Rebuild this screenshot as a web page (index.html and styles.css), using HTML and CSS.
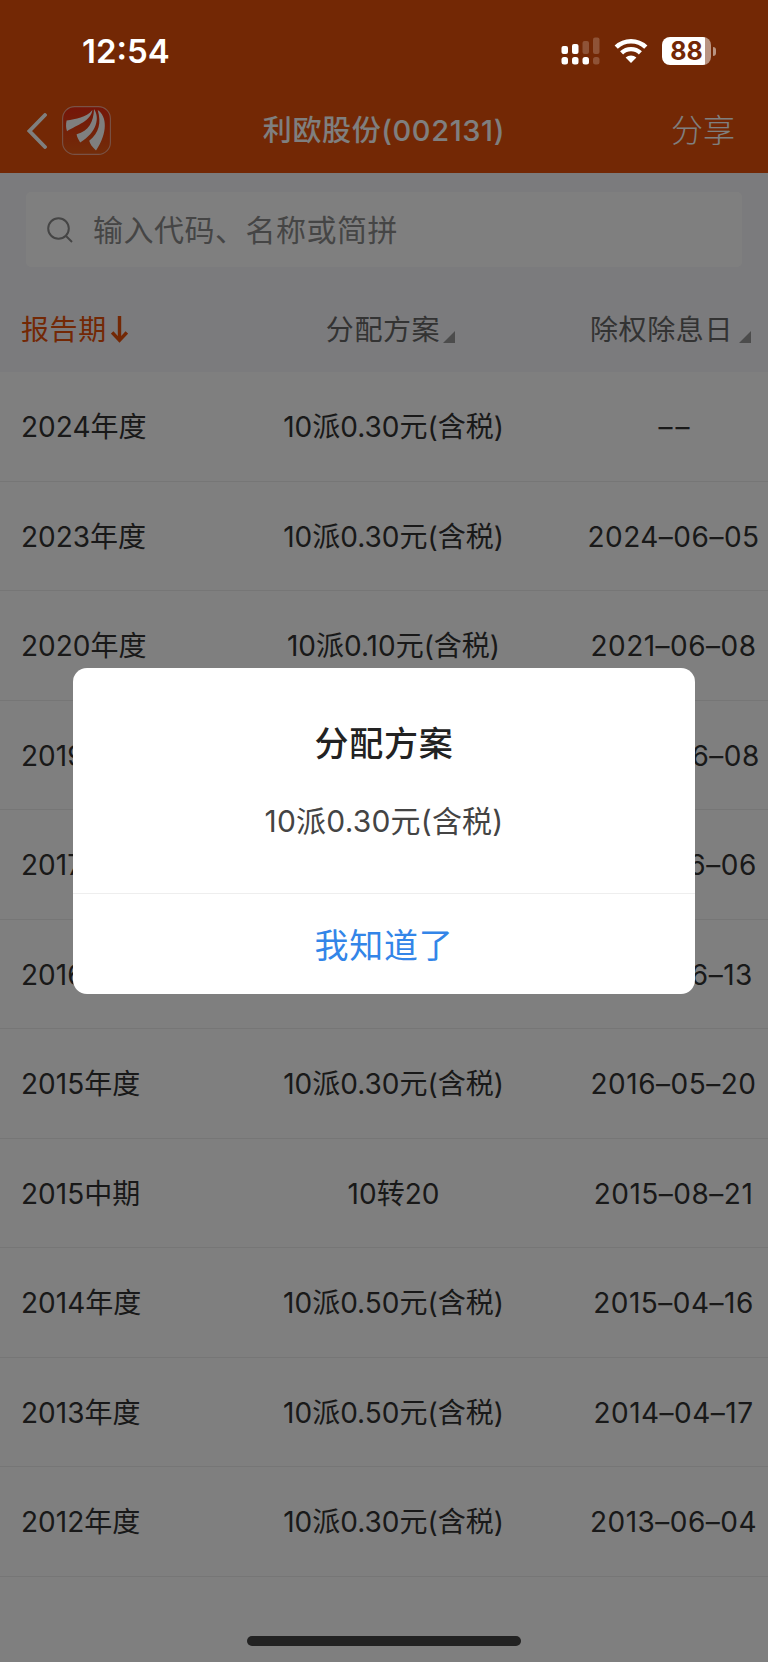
FILE: index.html
```
<!DOCTYPE html>
<html lang="zh-CN">
<head>
  <meta charset="UTF-8">
  <meta name="viewport" content="width=device-width, initial-scale=1.0">
  <title>利欧股份(002131)</title>
  <link rel="stylesheet" href="styles.css">
</head>
<body>

  <div class="app">
    <header class="header">
      <!-- Status bar -->
      <div class="status-bar">
        <span class="time">12:54</span>
        <div class="status-icons">
          <svg class="signal" width="39" height="28" viewBox="0 0 39 28" fill="#fff">
            <rect x="0.5" y="9" width="6.5" height="8" rx="2"/>
            <rect x="11" y="7" width="6.5" height="10" rx="2"/>
            <rect x="21.5" y="4" width="6.5" height="13" rx="2" opacity=".2"/>
            <rect x="32" y="0.5" width="6.5" height="16.5" rx="2" opacity=".2"/>
            <rect x="0.5" y="20" width="6.5" height="7.5" rx="2.5"/>
            <rect x="11" y="20" width="6.5" height="7.5" rx="2.5"/>
            <rect x="21.5" y="20" width="6.5" height="7.5" rx="2.5"/>
            <rect x="32" y="20" width="6.5" height="7.5" rx="2.5" opacity=".2"/>
          </svg>
          <svg class="wifi" width="34" height="26" viewBox="0 0 34 26">
            <path d="M2.2 9.2A21.5 21.5 0 0 1 31.8 9.2" fill="none" stroke="#fff" stroke-width="4.6"/>
            <path d="M7.6 14.9A13.6 13.6 0 0 1 26.4 14.9" fill="none" stroke="#fff" stroke-width="4.4"/>
            <path d="M11.6 19.6a8 8 0 0 1 10.8 0L17 25z" fill="#fff"/>
          </svg>
          <div class="battery"><span class="level">88</span></div>
          <span class="battery-cap"></span>
        </div>
      </div>

      <!-- Title bar -->
      <div class="nav">
        <div class="nav-left">
          <svg width="20" height="36" viewBox="0 0 20 36">
            <path d="M18 2 2.5 18 18 34" fill="none" stroke="#fff" stroke-width="3.8" stroke-linecap="round"/>
          </svg>
          <svg class="logo" width="49" height="49" viewBox="0 0 49 49">
            <defs>
              <linearGradient id="logoBg" x1="0" y1="0" x2="0" y2="1">
                <stop offset="0" stop-color="#ea2a10"/>
                <stop offset="1" stop-color="#e65a12"/>
              </linearGradient>
            </defs>
            <rect x=".6" y=".6" width="47.8" height="47.8" rx="12" fill="url(#logoBg)" stroke="#f2a58c" stroke-width="1.1"/>
            <g fill="#fff">
              <path d="M4.6 14.6C14 12.6 24 12 30.4 4 29 15 15 19 5 25.2 3.8 22 3.8 18 4.6 14.6z"/>
              <path d="M32 3C38 12 35 26 18.2 36.6 16 33 15 31 14.6 28.3 27 25 31.5 16 32 3z"/>
              <path d="M35.7 4C45 10 46 27 34 44.4 30 41 28 38 27.2 34.8 37 27 39.5 17 35.7 4z"/>
            </g>
          </svg>
        </div>
        <h1 class="nav-title">利欧股份(002131)</h1>
        <span class="share">分享</span>
      </div>
    </header>

    <div class="search">
      <div class="search-box">
        <svg width="26" height="26" viewBox="0 0 26 26" fill="none" stroke="#8a8a8a" stroke-width="2">
          <circle cx="11.5" cy="11.5" r="10.3"/>
          <path d="M18.5 18.5 25 25"/>
        </svg>
        <span>输入代码、名称或简拼</span>
      </div>
    </div>

    <div class="row table-head">
      <div class="sorted">报告期<svg width="17" height="27" viewBox="0 0 17 27" fill="none" stroke="#e6500a" stroke-width="3.4"><path d="M8.5 0v24M1.2 16.5l7.3 7.8 7.3-7.8"/></svg></div>
      <div>分配方案<i class="corner"></i></div>
      <div>除权除息日<i class="corner wide"></i></div>
    </div>

    <div class="row"><div>2024年度</div><div>10派0.30元(含税)</div><div class="date none">––</div></div>
    <div class="row"><div>2023年度</div><div>10派0.30元(含税)</div><div class="date">2024–06–05</div></div>
    <div class="row"><div>2020年度</div><div>10派0.10元(含税)</div><div class="date">2021–06–08</div></div>
    <div class="row"><div>2019年度</div><div>10派0.30元(含税)</div><div class="date">2020–06–08</div></div>
    <div class="row"><div>2017年度</div><div>10派0.30元(含税)</div><div class="date">2018–06–06</div></div>
    <div class="row"><div>2016年度</div><div>10派0.30元(含税)</div><div class="date">2017–06–13</div></div>
    <div class="row"><div>2015年度</div><div>10派0.30元(含税)</div><div class="date">2016–05–20</div></div>
    <div class="row"><div>2015中期</div><div>10转20</div><div class="date">2015–08–21</div></div>
    <div class="row"><div>2014年度</div><div>10派0.50元(含税)</div><div class="date">2015–04–16</div></div>
    <div class="row"><div>2013年度</div><div>10派0.50元(含税)</div><div class="date">2014–04–17</div></div>
    <div class="row"><div>2012年度</div><div>10派0.30元(含税)</div><div class="date">2013–06–04</div></div>

    <div class="overlay">
      <div class="dialog">
        <div class="dialog-body">
          <h2>分配方案</h2>
          <p>10派0.30元(含税)</p>
        </div>
        <button type="button" class="dialog-btn">我知道了</button>
      </div>
    </div>
    <div class="home-bar"></div>
  </div>

</body>
</html>
```
FILE: styles.css
```
* {
  box-sizing: border-box;
}
body {
  margin: 0;
  background-color: #fff;
  font-family: Inter, "Noto Sans CJK SC", sans-serif;
}
.app {
  position: relative;
  width: 768px;
  height: 1662px;
  overflow: hidden;
  background-color: #fff;
  color: #333;
}

/* header */
.header {
  height: 173px;
  background-color: #e6500a;
  color: #fff;
}
.status-bar {
  position: relative;
  z-index: 2;
  display: flex;
  justify-content: space-between;
  align-items: center;
  height: 91px;
  padding: 11px 52px 0 82px;
}
.time {
  font-size: 33px;
  font-weight: 600;
}
.status-icons {
  display: flex;
  align-items: center;
}
.wifi {
  margin: 0 14px;
}
.battery {
  width: 49px;
  height: 28px;
  border-radius: 8px;
  background: linear-gradient(to right, #fff 43px, #b99482 43px);
  color: #732805;
  text-align: center;
}
.level {
  display: block;
  font-size: 25px;
  font-weight: 700;
  line-height: 28px;
}
.battery-cap {
  width: 3px;
  height: 9px;
  margin-left: 2px;
  border-radius: 0 4px 4px 0;
  background-color: #b99482;
}
.nav {
  display: grid;
  grid-template-columns: 200px 1fr 200px;
  align-items: center;
  height: 79px;
}
.nav-left {
  display: flex;
  align-items: center;
  gap: 15px;
  padding-left: 27px;
}
.nav-title {
  margin: 0;
  padding-bottom: 6px;
  font-size: 29px;
  font-weight: 500;
  text-align: center;
  letter-spacing: 0.6px;
}
.share {
  padding: 0 33px 5px 0;
  font-size: 32px;
  font-weight: 300;
  text-align: right;
}

/* search */
.search {
  height: 96px;
  padding: 19px 26px 0;
  background-color: #f6f6fa;
}
.search-box {
  display: flex;
  align-items: center;
  gap: 20px;
  height: 75px;
  padding-left: 21px;
  border-radius: 5px;
  background-color: #fff;
  color: #8a8a8a;
  font-size: 30px;
  letter-spacing: 0.5px;
}
.search-box span {
  padding-bottom: 4px;
}

/* table */
.row {
  display: grid;
  grid-template-columns: 208px 371px 189px;
  align-items: center;
  height: 109.5px;
  border-bottom: 1px solid #ececec;
  font-size: 28px;
  text-align: center;
  white-space: nowrap;
}
.row > div {
  padding-bottom: 3px;
}
.row > div:first-child {
  padding-left: 21px;
  text-align: left;
}
.row > .date {
  padding: 1px 0 0;
  letter-spacing: 0.5px;
}
.row > .none {
  padding-left: 4px;
  letter-spacing: 3px;
}
.table-head {
  height: 103.4px;
  padding-top: 17px;
  border-bottom: none;
  background-color: #f6f6fa;
  color: #666;
  letter-spacing: 0.6px;
}
.table-head > div + div {
  padding-right: 6px;
}
.table-head .sorted {
  color: #e6500a;
}
.sorted svg {
  margin-left: 4px;
  vertical-align: -3px;
}
.corner {
  display: inline-block;
  margin-left: 3px;
  border-bottom: 12px solid #999;
  border-left: 12px solid transparent;
  vertical-align: -3px;
}
.corner.wide {
  margin-left: 6px;
}

/* dialog */
.overlay {
  position: absolute;
  inset: 0;
  z-index: 1;
  display: flex;
  justify-content: center;
  align-items: center;
  background-color: rgba(0, 0, 0, 0.5);
}
.dialog {
  width: 622px;
  height: 326px;
  border-radius: 14px;
  background-color: #fff;
  text-align: center;
}
.dialog-body {
  height: 226px;
  padding-top: 50px;
  border-bottom: 1px solid #eee;
}
.dialog h2 {
  margin: 0;
  color: #222;
  font-size: 34px;
  font-weight: 500;
  line-height: 52px;
  letter-spacing: 0.8px;
}
.dialog p {
  margin: 29px 0 0;
  color: #444;
  font-size: 30px;
  line-height: 44px;
  letter-spacing: 0.2px;
}
.dialog-btn {
  width: 100%;
  height: 100px;
  padding: 0 0 2px;
  border: none;
  background: none;
  color: #3385e8;
  font-family: inherit;
  font-size: 34px;
  letter-spacing: 0.8px;
}
.home-bar {
  position: absolute;
  bottom: 16px;
  left: 247px;
  z-index: 2;
  width: 274px;
  height: 10px;
  border-radius: 5px;
  background-color: #222;
}
```
